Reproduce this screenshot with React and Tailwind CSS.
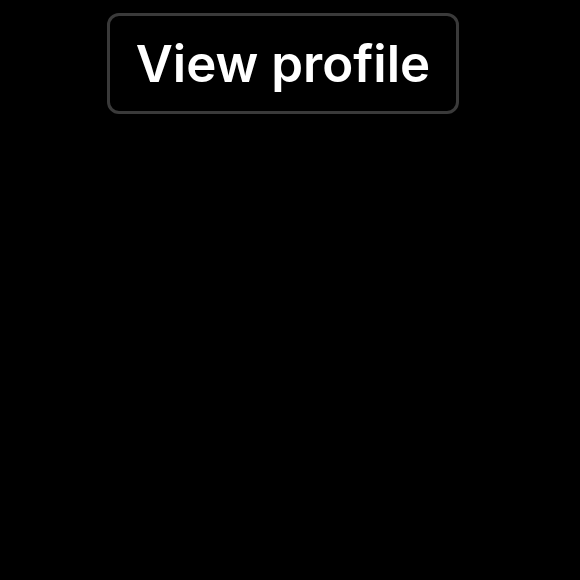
export default function App() {
  return (
    <div className="min-h-screen w-full bg-black" style={{ fontFamily: 'Inter, "Noto Sans", sans-serif' }}>
      <div className="pt-[13px] pl-[107px]">
        <button className="flex h-[101px] w-[352px] items-center justify-center rounded-[12px] border-[3px] border-[#3a3a3a] bg-black pt-[2px] text-[51px] font-semibold text-white">
          View profile
        </button>
      </div>
    </div>
  );
}
